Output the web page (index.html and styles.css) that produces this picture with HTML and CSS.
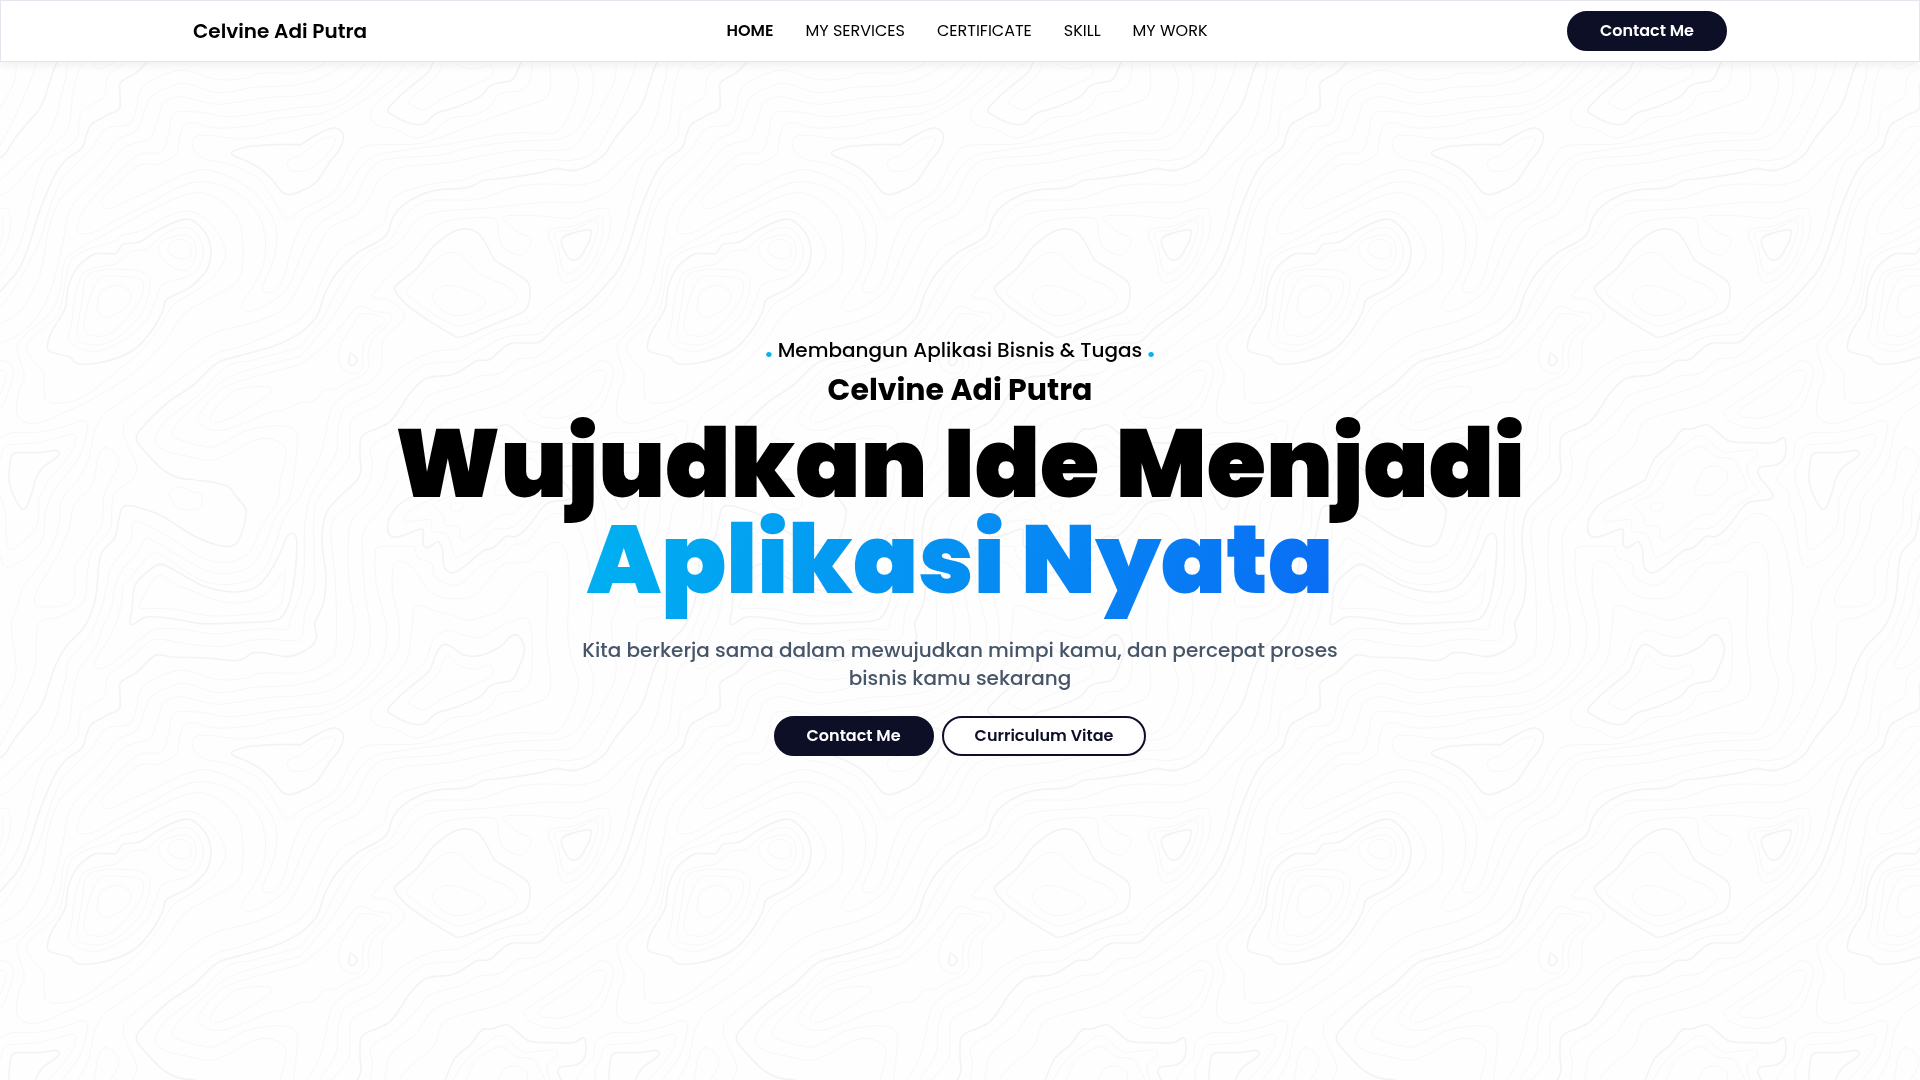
FILE: index.html
```html
<!DOCTYPE html>
<html lang="id">
<head>
<meta charset="utf-8">
<meta name="viewport" content="width=device-width, initial-scale=1">
<title>Celvine Adi Putra</title>
<link rel="stylesheet" href="styles.css">
</head>
<body>
<svg class="topography" aria-hidden="true">
  <defs>
    <pattern id="contours" y="-120" width="600" height="600" patternUnits="userSpaceOnUse" viewBox="0 0 1800 1800">
      <path id="contours-thin" class="contour"></path>
      <path id="contours-bold" class="contour contour-bold"></path>
    </pattern>
  </defs>
  <rect width="100%" height="100%" fill="url(#contours)"></rect>
</svg>

<header class="navbar">
  <div class="navbar-inner">
    <a class="brand" href="#home">Celvine Adi Putra</a>
    <nav class="menu" aria-label="Main">
      <a class="menu-link active" href="#home">HOME</a>
      <a class="menu-link" href="#services">MY SERVICES</a>
      <a class="menu-link" href="#certificate">CERTIFICATE</a>
      <a class="menu-link" href="#skill">SKILL</a>
      <a class="menu-link" href="#work">MY WORK</a>
    </nav>
    <button class="btn btn-solid" type="button">Contact Me</button>
  </div>
</header>

<main class="hero" id="home">
  <p class="eyebrow"><span class="dot">.</span> Membangun Aplikasi Bisnis &amp; Tugas <span class="dot">.</span></p>
  <h2 class="name">Celvine Adi Putra</h2>
  <h1 class="headline">Wujudkan Ide Menjadi<br><span class="gradient">Aplikasi Nyata</span></h1>
  <p class="lead">Kita berkerja sama dalam mewujudkan mimpi kamu, dan percepat proses bisnis kamu sekarang</p>
  <div class="actions">
    <button class="btn btn-solid" type="button">Contact Me</button>
    <button class="btn btn-outline" type="button">Curriculum Vitae</button>
  </div>
</main>
<script src="contours.js"></script>
</body>
</html>
```
FILE: styles.css
```css
* {
  box-sizing: border-box;
}

body {
  margin: 0;
  min-height: 100vh;
  background: #fefefe;
  color: #000;
  font-family: Poppins, Inter, sans-serif;
  font-size: 16px;
  line-height: 24px;
}

a {
  color: inherit;
  text-decoration: none;
}

h1,
h2,
p {
  margin: 0;
}

/* Repeating contour-line backdrop */
.topography {
  position: fixed;
  inset: 0;
  z-index: -1;
  width: 100%;
  height: 100%;
}

.contour {
  fill: none;
  stroke: #f6f6f6;
  stroke-width: 3;
  stroke-linejoin: round;
}

.contour-bold {
  stroke: #f3f3f3;
  stroke-width: 5;
}

/* Top bar */
.navbar {
  position: fixed;
  top: 0;
  left: 0;
  right: 0;
  z-index: 1;
  padding: 10px 10%;
  border: 1px solid #e5e5ee;
  background: #fff;
  box-shadow: 0 4px 8px rgba(0, 0, 0, 0.05);
}

.navbar-inner {
  display: flex;
  align-items: center;
  justify-content: space-between;
}

.brand {
  font-size: 20px;
  font-weight: 600;
  line-height: 28px;
}

.menu {
  display: flex;
  gap: 32px;
}

.active {
  font-weight: 600;
}

/* Buttons */
.btn {
  padding: 6px 31px;
  border: 2px solid #0d0f26;
  border-radius: 20px;
  font: inherit;
  font-weight: 600;
  cursor: pointer;
}

.btn-solid {
  background: #0d0f26;
  color: #fff;
}

.btn-outline {
  background: #fff;
  color: #0d0f26;
}

/* Hero */
.hero {
  display: flex;
  flex-direction: column;
  align-items: center;
  justify-content: center;
  min-height: 100vh;
  padding: 32px 16px 22px;
  text-align: center;
}

.eyebrow {
  font-size: 20px;
  font-weight: 500;
  line-height: 28px;
}

.dot {
  color: #0cb0f0;
  font-size: 24px;
  font-weight: 800;
}

.name {
  margin-top: 8px;
  font-size: 30px;
  font-weight: 700;
  line-height: 36px;
}

.headline {
  margin-top: 8px;
  font-size: 96px;
  font-weight: 900;
  line-height: 96px;
}

.gradient {
  background: linear-gradient(110deg, #00b2f0, #0a6cf5);
  background-clip: text;
  -webkit-background-clip: text;
  color: transparent;
}

.lead {
  max-width: 768px;
  margin-top: 28px;
  color: #475569;
  font-size: 20px;
  font-weight: 500;
  line-height: 28px;
}

.actions {
  display: flex;
  gap: 8px;
  margin-top: 24px;
}
```
FILE: contours.js
```js
// Contour lines of one 1800 x 1800 tile, in four quadrants.
// Each line: b = bold, t = thin, z = closed; then its x,y points.
const quadrants = [
  { x: 0, y: 0, lines: `
b 26,0 38,40 58,78 70,88 82,76 95,40 106,0
b 585,0 640,7 685,20 705,45 735,82 738,105 730,145 712,187 690,199 650,195 590,172 540,142 480,105 420,84 380,77 365,86 355,125 345,172 307,215 296,260 290,330 280,380 250,445 200,497 165,560 125,675 80,732 45,775 20,815 0,835
bz 474,254 440,277 408,310 400,340 396,385 390,428 402,432 440,411 510,415 600,430 660,431 740,427 820,423 850,405 870,360 885,280 890,180 876,160 860,172 840,220 810,275 770,320 720,335 670,333 610,318 560,292 500,258
b 900,520 860,530 800,520 760,518 735,533 705,542 620,534 520,531 475,524 450,537 410,577 362,607 360,640 358,686 320,706 275,733 262,757 245,805 200,837 175,868 157,900
b 900,794 820,794 740,801 698,815 700,826 740,843 780,865 818,900
t 0,45 15,95 19,160 23,200 36,207 75,180 108,140 116,100 118,55 146,0
t 0,225 10,255 25,262 80,232 120,190 132,150 135,100 155,45 186,0
t 235,0 185,60 178,130 150,210 110,268 68,325 50,385 35,430 38,480 48,550 42,605 0,685
t 283,0 265,30 222,75 207,145 170,230 120,315 103,360 112,378 150,381 190,377 218,355 225,330 226,262 250,220 300,145 308,115 312,50 332,0
t 396,0 345,40 335,90 330,150 275,215 260,300 257,350 235,380 175,412 130,420 113,440 108,500 105,560 70,655 30,740 0,798
tz 508,40 520,25 545,22 580,36 604,43 605,75 590,88 555,89 525,78
t 840,0 833,60 785,140 750,215 700,244 650,246 600,230 480,155 410,124 396,140 390,185 335,260 320,320 305,380 275,455 250,490 208,540 195,600 165,720 130,780 60,845 0,900
t 880,0 865,60 828,110 800,180 770,240 730,270 670,281 620,272 540,230 450,176 435,177 415,215 370,265 345,320 335,380 305,450 285,505 240,565 220,630 205,740 170,785 110,840 60,900
t 900,50 855,110 830,180 800,255 760,295 700,312 640,311 580,288 490,229 460,220 435,240 390,295 370,320 360,390 335,460 290,535 284,560 300,566 340,548 390,505 450,455 490,446 550,448 640,462 730,452 800,446 862,447 870,420 900,350
tz 474,287 450,315 418,378 440,385 520,388 640,408 760,401 820,391 845,365 853,310 854,268 830,305 800,340 750,363 700,369 640,358 570,330 530,316 495,291
t 900,480 860,482 800,477 740,483 670,499 600,496 540,488 470,478 430,500 380,545 330,580 318,610 312,650 250,690 238,720 232,770 200,805 140,840 112,900
t 900,580 780,580 740,594 680,600 620,592 570,573 520,574 450,603 420,635 405,700 385,733 325,743 300,765 275,805 220,860 182,900
t 900,612 860,618 760,622 690,636 640,636 560,610 510,620 455,648 435,690 410,750 350,780 320,820 240,900
t 900,648 800,653 670,672 620,668 540,650 490,670 470,730 445,778 370,805 290,900
t 900,682 800,696 690,710 600,697 540,695 515,710 505,770 480,817 415,825 330,900
t 900,708 820,717 780,733 700,743 640,743 570,728 545,750 530,820 510,835 473,854 420,854 365,900
t 900,748 800,768 720,777 640,767 590,768 576,785 585,815 620,839 680,850 740,875 783,900
t 900,827 870,838 862,855 875,873 900,875
t 515,900 560,880 615,869 660,880 707,900` },
  { x: 900, y: 0, lines: `
b 172,0 100,70 75,110 66,180 72,240 78,290 70,370 45,430 50,470 35,498 0,520
b 435,0 390,25 310,65 270,110 264,155 280,171 310,166 363,147 370,160 370,195 385,202 412,186 427,205 430,250 440,272 460,278 490,262 550,212 580,203 617,170 645,170 680,145 735,75 770,63 810,58 817,40 785,0
bz 645,464 625,475 600,500 540,527 490,524 450,497 425,497 405,530 385,575 320,630 265,685 280,707 330,730 370,732 410,700 470,681 540,650 575,615 635,600 655,565 673,515 665,480
b 0,795 60,758 105,744 130,765 120,805 90,845 55,900
b 900,835 860,860 815,872 770,866 720,878 640,891 550,900
t 22,0 0,50
t 58,0 28,60 14,140 12,280 0,350
t 95,0 55,55 42,110 42,220 43,320 15,400 10,460 0,478
t 210,0 180,50 110,105 93,150 97,220 107,320 108,500 85,540 40,568 0,578
t 253,0 225,50 160,115 145,180 148,320 165,430 150,520 110,568 50,600 0,611
t 295,0 250,80 193,150 188,230 195,340 210,440 205,520 170,580 90,630 0,647
t 0,682 60,678 130,655 225,570 255,510 258,430 230,320 226,225 240,200 335,200 345,205 355,235 395,250 398,280 420,302 460,316 495,303 540,258 600,232 640,195 680,187 730,125 775,100 830,135 860,220 878,340 873,440 863,530 880,590 870,670 830,750 780,776 740,780 640,785 510,802 420,825 300,833 230,850 190,900
t 0,706 70,698 170,645 280,530 298,460 290,390 277,330 280,260 300,243 340,265 380,325 420,350 480,356 530,340 600,260 650,248 690,243 735,200 775,188 800,220 808,320 803,440 812,530 836,610 810,700 770,755 730,760 640,759 510,780 430,795 270,817 210,835 175,870 156,900
t 0,747 80,722 200,655 310,560 335,450 342,385 365,377 410,395 440,400 500,420 540,412 600,390 650,325 700,280 735,278 743,310 740,480 752,600 735,655 670,680 580,712 480,750 400,780 340,793 210,796 165,825 124,900
tz 212,700 230,735 285,747 345,773 400,755 450,715 520,706 570,680 600,640 660,632 690,600 697,520 690,430 665,415 600,440 540,472 490,465 440,452 400,480 370,550 300,610 230,670
t 827,0 865,35 867,75 882,110 900,230
t 885,0 900,45
t 900,695 860,750 820,800 760,812 660,811 560,825 430,850 300,862 235,900
t 900,800 860,830 800,842 730,838 620,858 548,878 490,900
t 460,0 430,38 340,85 310,120 325,125 390,120 398,155 440,160 455,200 472,232 540,190 580,150 640,140 700,85 760,47 780,38 753,0
t 497,0 465,40 410,65 405,80 430,105 435,135 475,140 487,180 530,160 600,107 640,100 690,50 735,30 735,0
tz 450,78 465,67 488,72 490,82 475,95 455,92
t 595,0 582,30 598,47 640,40 683,0
tz 440,527 420,570 400,600 330,658 345,680 375,688 430,655 500,625 565,595 580,575 570,556 520,567 480,557
t 0,827 60,780 100,772 105,785 80,825 40,860 0,875` },
  { x: 0, y: 900, lines: `
t 60,0 35,28 0,47
t 112,0 90,80 70,160 50,215 0,290
b 157,0 120,90 85,200 55,270 0,335
t 182,0 150,80 120,180 75,270 40,330 0,382
t 240,0 180,60 145,150 130,240 110,310 60,395 0,432
t 290,0 215,80 190,180 165,290 130,380 70,455 0,490
t 365,0 315,45 305,70 325,86 400,55 515,0
t 330,0 262,75 232,135 240,160 285,155 340,125 430,80 540,20 610,6 680,22 750,70 790,140 795,230 770,300 730,365 730,388 760,391 830,355 870,310 900,235
t 707,0 770,45 820,120 830,190 815,255 790,315 795,337 820,333 850,295 870,220 900,140
t 783,0 830,75 855,115 875,112 900,90
b 818,0 845,35 870,44 900,35
tz 575,40 650,55 710,110 728,180 725,270 700,315 620,360 550,405 490,490 400,580 290,650 200,695 120,728 70,725 50,695 55,640 73,590 60,540 52,500 80,460 150,400 180,330 190,260 215,220 340,150 450,90
tz 555,94 600,105 650,155 677,220 650,280 590,330 520,375 480,440 420,515 330,590 260,645 200,668 145,665 133,640 130,580 95,535 80,510 90,480 160,420 185,370 198,290 215,240 260,210 340,185 370,165 430,150 490,115
bz 550,118 590,130 625,175 633,220 620,270 570,322 500,358 488,395 450,460 400,510 330,541 250,553 225,547 208,530 155,517 142,500 155,455 195,385 205,320 230,265 285,222 345,221 370,193 420,185 480,147
tz 545,142 590,160 610,210 600,255 570,287 490,312 470,350 440,420 380,475 300,512 245,508 205,480 215,430 225,350 250,280 300,260 350,250 390,215 440,207 490,165
tz 545,164 580,178 587,220 570,265 535,268 495,245 475,212 485,185
tz 542,178 570,192 571,225 550,237 520,228 503,210 518,185
tz 270,280 390,269 435,282 450,310 430,390 370,460 300,494 240,485 232,450 245,370
tz 320,289 400,292 428,305 425,350 380,415 320,465 265,462 253,430 270,350 295,300
tz 345,316 385,330 392,360 365,393 315,412 293,390 300,340
t 0,86 25,90 32,130 20,190 0,230
t 0,106 10,115 8,160 0,195
t 0,542 30,550 40,580 20,650 0,690
t 0,570 18,580 10,620 0,642
t 0,772 40,758 120,756 190,740 250,722 262,745 240,825 186,900
t 0,840 15,800 50,793 120,787 215,763 227,785 205,830 146,900
b 27,900 30,850 45,820 120,818 170,811 172,830 125,865 106,900
t 235,900 265,840 280,770 305,710 370,660 490,578 560,510 640,460 750,430 830,400 870,365 900,310
t 396,900 410,860 385,800 370,750 390,710 480,640 580,570 650,520 720,500 830,455 900,418
b 585,900 530,892 490,870 440,820 410,780 425,745 500,670 580,615 650,550 720,527 830,495 900,460
t 900,502 760,540 680,560 590,650 500,720 466,780 490,810 560,828 630,841 690,820 740,790 800,775 850,795 858,830 840,900
t 900,530 720,578 640,625 560,700 517,755 530,775 600,797 650,798 730,755 800,740 860,740 892,770 880,900
t 900,554 700,610 640,650 595,710 605,735 650,752 720,735 800,700 850,690 900,668
tz 720,626 805,620 810,640 760,675 700,710 650,728 630,715 650,680 680,650
t 283,900 295,830 315,803 345,820 356,850 332,900` },
  { x: 900, y: 900, lines: `
b 55,0 30,20 0,35
t 124,0 90,45 0,90
t 156,0 110,60 30,105 0,140
t 190,0 155,70 60,130 20,190 0,235
t 235,0 180,95 90,145 50,210 0,310
t 490,0 380,15 290,45 265,80 250,130 180,175 120,210 70,290 40,370 0,418
b 550,0 500,23 400,32 320,68 280,110 255,170 170,220 110,280 75,340 50,410 0,460
t 900,0 840,15 740,12 650,20 540,57 470,60 380,63 320,100 270,180 200,220 130,300 70,410 0,502
t 900,47 840,66 720,68 580,83 420,95 350,120 300,185 230,230 170,290 100,410 0,530
t 900,86 860,95 810,115 720,108 625,107 613,120 655,157 692,175 685,205 660,225 612,205 595,160 580,115 460,120 400,145 330,225 260,295 218,345 225,355 265,360 305,390 310,420 250,480 245,555 215,603 145,635 95,685 75,770 60,830 22,900
t 0,554 70,500 130,430 175,380 230,395 270,400 270,425 220,475 205,520 200,575 145,605 110,625 70,632 45,660 0,668
tz 185,402 150,450 120,500 120,555 150,577 185,570 190,500 210,465 255,418
bz 152,520 172,540 158,557 147,548
bz 500,147 535,160 560,195 585,240 640,275 685,310 688,360 670,395 600,425 490,469 450,460 340,390 287,335 295,310 350,265 400,200 460,155
tz 455,217 490,232 540,280 630,325 650,358 620,385 490,436 430,420 330,350 325,325 400,245
tz 445,317 480,322 545,350 555,375 520,397 465,407 420,385 398,350 415,325
bz 787,175 865,149 870,175 845,225 820,241 800,225
tz 765,157 820,150 890,121 885,180 850,250 805,281 785,260 775,200
t 900,106 830,135 755,148 745,165 765,220 780,290 800,308 840,290 880,240 900,195
t 900,230 860,295 750,375 690,425 590,450 480,503 390,518 300,565 225,635 140,680 115,740 108,820 58,900
t 900,290 850,350 760,415 720,460 620,470 540,510 480,543 380,553 310,600 245,670 165,710 150,750 145,835 95,900
b 900,335 860,375 770,440 715,487 630,491 570,538 530,543 460,583 380,595 330,640 270,725 190,765 180,820 183,870 172,900
t 900,382 800,455 720,525 650,540 600,580 530,590 490,615 390,645 350,690 290,750 215,800 218,850 210,900
t 900,432 770,530 650,580 600,615 500,650 400,690 350,760 275,820 253,900
t 900,490 770,570 620,665 500,700 430,730 400,800 340,850 295,900
t 900,542 830,590 690,680 675,705 700,730 760,745 820,735 900,690
t 900,570 860,585 810,630 720,690 730,710 790,712 860,685 900,642
b 435,900 465,835 510,795 545,750 575,747 620,734 650,755 690,784 760,788 820,788 850,773 858,800 850,840 825,855 780,862 775,880 785,900
t 460,900 500,840 580,775 610,768 640,795 680,817 760,809 772,825 745,850 742,875 753,900
t 497,900 530,840 600,800 650,830 700,838 720,870 735,900
t 595,900 615,865 650,858 678,875 683,900
t 900,772 885,790 880,830 850,865 827,900
t 900,840 887,870 885,900` }
];

// Smooth curve through the points (Catmull-Rom turned into cubic Béziers).
function curve(points, closed) {
  const n = points.length;
  const at = i => closed ? points[(i + n) % n] : points[Math.max(0, Math.min(n - 1, i))];
  let d = `M${points[0]}`;
  for (let i = 0; i < (closed ? n : n - 1); i++) {
    const [p, a, b, q] = [at(i - 1), at(i), at(i + 1), at(i + 2)];
    const c1 = [a[0] + (b[0] - p[0]) / 6, a[1] + (b[1] - p[1]) / 6];
    const c2 = [b[0] - (q[0] - a[0]) / 6, b[1] - (q[1] - a[1]) / 6];
    d += `C${c1} ${c2} ${b}`;
  }
  return d;
}

const paths = { t: "", b: "" };
for (const quadrant of quadrants) {
  for (const line of quadrant.lines.trim().split("\n")) {
    const [kind, ...pairs] = line.trim().split(" ");
    const points = pairs.map(pair => {
      const [x, y] = pair.split(",").map(Number);
      return [x + quadrant.x, y + quadrant.y];
    });
    paths[kind[0]] += curve(points, kind.endsWith("z"));
  }
}
document.getElementById("contours-thin").setAttribute("d", paths.t);
document.getElementById("contours-bold").setAttribute("d", paths.b);
```
